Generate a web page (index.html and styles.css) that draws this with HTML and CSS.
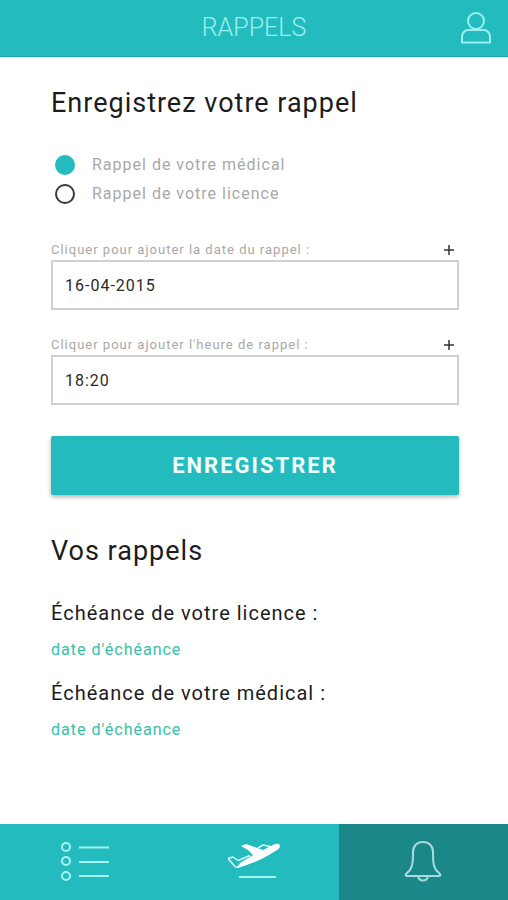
FILE: index.html
```html
<!DOCTYPE html>
<html lang="fr">
<head>
<meta charset="utf-8">
<meta name="viewport" content="width=device-width, initial-scale=1">
<title>Rappels</title>
<link rel="stylesheet" href="styles.css">
</head>
<body>
<header class="topbar">
  <h1 class="topbar-title">RAPPELS</h1>
  <a class="profile" href="#profil" aria-label="Profil">
    <svg width="32" height="34" viewBox="0 0 32 34" fill="none" stroke="currentColor" stroke-width="2">
      <circle cx="16" cy="10" r="8"/>
      <path d="M2 31.500V26c0-4 3-7 6-7h16c3 0 6 3 6 7v5.500Z"/>
    </svg>
  </a>
</header>
<main class="content">
  <form class="form">
    <h2 class="heading">Enregistrez votre rappel</h2>
    <div class="choices">
      <label class="choice"><input class="radio" type="radio" name="type" checked>Rappel de votre médical</label>
      <label class="choice"><input class="radio" type="radio" name="type">Rappel de votre licence</label>
    </div>
    <div class="field">
      <div class="field-head">
        <label for="date">Cliquer pour ajouter la date du rappel :</label>
        <button class="add" type="button" aria-label="Ajouter la date"><svg width="10" height="10" viewBox="0 0 10 10" stroke="currentColor" stroke-width="1.500"><path d="M5 0v10M0 5h10"/></svg></button>
      </div>
      <input class="text" id="date" type="text" value="16-04-2015">
    </div>
    <div class="field">
      <div class="field-head">
        <label for="heure">Cliquer pour ajouter l'heure de rappel :</label>
        <button class="add" type="button" aria-label="Ajouter l'heure"><svg width="10" height="10" viewBox="0 0 10 10" stroke="currentColor" stroke-width="1.500"><path d="M5 0v10M0 5h10"/></svg></button>
      </div>
      <input class="text" id="heure" type="text" value="18:20">
    </div>
    <button class="submit" type="submit">ENREGISTRER</button>
  </form>
  <section>
    <h2 class="heading">Vos rappels</h2>
    <dl class="reminders">
      <div class="reminder"><dt>Échéance de votre licence :</dt><dd>date d'échéance</dd></div>
      <div class="reminder"><dt>Échéance de votre médical :</dt><dd>date d'échéance</dd></div>
    </dl>
  </section>
</main>
<nav class="tabs">
  <a class="tab" href="#liste" aria-label="Liste">
    <svg width="50" height="42" viewBox="0 0 50 42" fill="none" stroke="currentColor" stroke-width="2">
      <circle cx="6" cy="6" r="4"/><circle cx="6" cy="20" r="4"/><circle cx="6" cy="35" r="4"/>
      <path d="M19 6.500h30M19 21h30M19 35h30"/>
    </svg>
  </a>
  <a class="tab" href="#vols" aria-label="Vols">
    <svg width="54" height="42" viewBox="0 0 54 42" fill="none" stroke="currentColor" stroke-width="1.500" stroke-linejoin="round">
      <path class="plane-line" d="M1 17.500l5-1.500 5 3.500 12-5M1 17.500l7 8c1 1 3 1 5 0l8-3"/>
      <path class="plane-line" d="M31 7l5-3 9 2"/>
      <path class="plane-body" d="M14 5l5-2 17 6 8-4c3-2 6-2.500 8-2 1.500 2 1 4-2 6-8 5-16 10-25 13-6 2-11 4-15 4l3-4 13-8-5-5Z"/>
      <path d="M12 36h37" stroke-width="2"/>
    </svg>
  </a>
  <a class="tab tab-active" href="#rappels" aria-label="Rappels" aria-current="page">
    <svg width="38" height="42" viewBox="0 0 38 42" fill="none" stroke="currentColor" stroke-width="2" stroke-linejoin="round">
      <path d="M19 1C13 1 9 5 9 11c0 8 0 13-3 18l-4 4c-1 1 0 2 1 2h32c1 0 2-1 1-2l-4-4c-3-5-3-10-3-18 0-6-4-10-10-10Z"/>
      <path d="M14 35c1 6 9 6 10 0"/>
    </svg>
  </a>
</nav>
</body>
</html>
```
FILE: styles.css
```css
* { box-sizing: border-box; }

body {
  margin: 0;
  min-height: 100vh;
  display: flex;
  flex-direction: column;
  background: #fff;
  color: #1c1c1c;
  font-family: Roboto, sans-serif;
  letter-spacing: 1px;
}

input, button { font: inherit; letter-spacing: inherit; }
svg { display: block; }

.topbar {
  display: grid;
  grid-template-columns: 1fr auto 1fr;
  align-items: center;
  height: 57px;
  padding: 0 16px;
  background: #24bbbe;
  border-bottom: 1px solid #10acad;
}
.topbar-title {
  grid-column: 2;
  margin: 0;
  font-size: 25px;
  line-height: 32px;
  font-weight: 300;
  letter-spacing: 0;
  color: #9af0ee;
}
.profile { justify-self: end; color: #9af0ee; }

.content { flex: 1; padding: 30px 49px 30px 51px; }

.heading {
  margin: 0;
  font-size: 27px;
  line-height: 32px;
  font-weight: 400;
}

.choices { margin: 31px 0 32px; }
.choice {
  display: flex;
  align-items: center;
  gap: 17px;
  padding-left: 4px;
  font-size: 16px;
  line-height: 29px;
  color: #a8a8a8;
}
.radio {
  appearance: none;
  width: 20px;
  height: 20px;
  margin: 0;
  border: 2px solid #3a3a3a;
  border-radius: 50%;
}
.radio:checked { border-color: #24bbbe; background: #24bbbe; }

.field { margin-bottom: 25px; }
.field-head {
  display: flex;
  justify-content: space-between;
  align-items: center;
  padding-right: 5px;
  font-size: 13px;
  line-height: 20px;
  color: #a8a8a8;
}
.add { padding: 0; border: 0; background: none; color: #333; }
.text {
  display: block;
  width: 100%;
  height: 50px;
  padding: 0 12px;
  border: 2px solid #d0d0d0;
  background: #fff;
  font-size: 16px;
  color: #2a2a2a;
}

.submit {
  display: block;
  width: 100%;
  height: 59px;
  margin: 31px 0 40px;
  border: 0;
  border-radius: 2px;
  background: #24bbbe;
  box-shadow: 0 2px 4px rgba(0, 0, 0, 0.3);
  font-size: 22px;
  font-weight: 700;
  letter-spacing: 2px;
  color: #f2ffff;
}

.reminders { margin: 32px 0 0; }
.reminder { margin-bottom: 17px; }
dt { font-size: 20px; line-height: 28px; }
dd {
  margin: 11px 0 0;
  font-size: 16px;
  line-height: 24px;
  color: #35bfa9;
}

.tabs {
  display: grid;
  grid-template-columns: 1fr 1fr 1fr;
  height: 76px;
}
.tab {
  display: flex;
  align-items: center;
  justify-content: center;
  background: #24bbbe;
  color: #a5f2f0;
}
.tab-active { background: #1b8788; color: #a5dce0; }
.plane-line { stroke: #d5fbfa; }
.plane-body { fill: #fff; stroke: none; }
```
